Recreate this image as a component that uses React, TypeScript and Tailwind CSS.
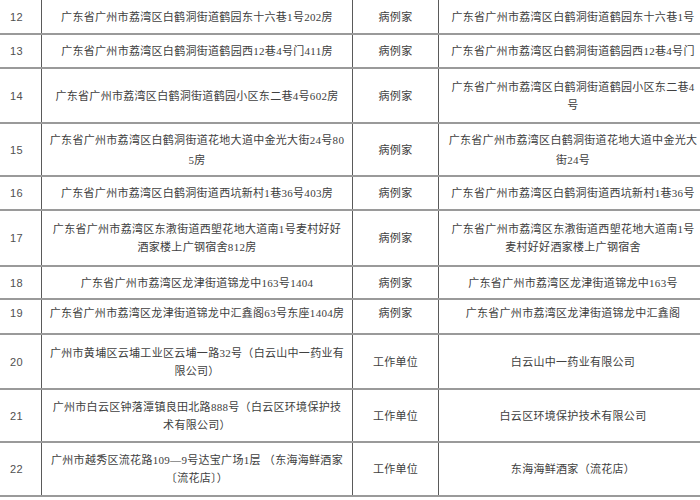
type Row = {
  no: string;
  h: string;
  addr: string[];
  kind: string;
  place: string[];
  pad?: string;
};

const rows: Row[] = [
  { no: "12", h: "h-[35px]", addr: ["广东省广州市荔湾区白鹤洞街道鹤园东十六巷1号202房"], kind: "病例家", place: ["广东省广州市荔湾区白鹤洞街道鹤园东十六巷1号"] },
  { no: "13", h: "h-[34px]", addr: ["广东省广州市荔湾区白鹤洞街道鹤园西12巷4号门411房"], kind: "病例家", place: ["广东省广州市荔湾区白鹤洞街道鹤园西12巷4号门"] },
  { no: "14", h: "h-[55px]", addr: ["广东省广州市荔湾区白鹤洞街道鹤园小区东二巷4号602房"], kind: "病例家", place: ["广东省广州市荔湾区白鹤洞街道鹤园小区东二巷4", "号"] },
  { no: "15", h: "h-[53px] leading-[20px]", addr: ["广东省广州市荔湾区白鹤洞街道花地大道中金光大街24号80", "5房"], kind: "病例家", place: ["广东省广州市荔湾区白鹤洞街道花地大道中金光大", "街24号"] },
  { no: "16", h: "h-[34px]", addr: ["广东省广州市荔湾区白鹤洞街道西坑新村1巷36号403房"], kind: "病例家", place: ["广东省广州市荔湾区白鹤洞街道西坑新村1巷36号"] },
  { no: "17", h: "h-[56px]", addr: ["广东省广州市荔湾区东漖街道西塱花地大道南1号麦村好好", "酒家楼上广钢宿舍812房"], kind: "病例家", place: ["广东省广州市荔湾区东漖街道西塱花地大道南1号", "麦村好好酒家楼上广钢宿舍"] },
  { no: "18", h: "h-[33px]", addr: ["广东省广州市荔湾区龙津街道锦龙中163号1404"], kind: "病例家", place: ["广东省广州市荔湾区龙津街道锦龙中163号"] },
  { no: "19", h: "h-[35px]", pad: "pb-[8px]", addr: ["广东省广州市荔湾区龙津街道锦龙中汇鑫阁63号东座1404房"], kind: "病例家", place: ["广东省广州市荔湾区龙津街道锦龙中汇鑫阁"] },
  { no: "20", h: "h-[55px]", addr: ["广州市黄埔区云埔工业区云埔一路32号（白云山中一药业有", "限公司）"], kind: "工作单位", place: ["白云山中一药业有限公司"] },
  { no: "21", h: "h-[53px]", addr: ["广州市白云区钟落潭镇良田北路888号（白云区环境保护技", "术有限公司）"], kind: "工作单位", place: ["白云区环境保护技术有限公司"] },
  { no: "22", h: "h-[54px]", addr: ["广州市越秀区流花路109—9号达宝广场1层 （东海海鲜酒家", "〔流花店〕）"], kind: "工作单位", place: ["东海海鲜酒家（流花店）"] },
];

function Lines({ lines }: { lines: string[] }) {
  return (
    <div className="flex flex-col items-center">
      {lines.map((l, i) => (
        <span key={i} className="whitespace-nowrap">{l}</span>
      ))}
    </div>
  );
}

export default function App() {
  return (
    <div className="w-[700px] h-[500px] overflow-hidden bg-white">
      <div
        className="ml-[-8px] w-[715px] text-[11px] leading-[18px] tracking-[0.3px] text-[#404040]"
        style={{ fontFamily: '"Liberation Serif", "Noto Sans CJK SC", serif' }}
      >
        {rows.map((r) => (
          <div
            key={r.no}
            className={`grid grid-cols-[50px_311px_86px_268px] border-b-2 border-[#9a9a9a] ${r.h}`}
          >
            <div className={`flex items-center justify-center border-r border-[#5a5a5a] font-['Liberation_Sans',sans-serif] text-[11px] text-[#505050] ${r.pad ?? ""}`}>
              {r.no}
            </div>
            <div className={`flex items-center justify-center border-r border-[#5a5a5a] ${r.pad ?? ""}`}>
              <Lines lines={r.addr} />
            </div>
            <div className={`flex items-center justify-center border-r border-[#5a5a5a] ${r.pad ?? ""}`}>
              {r.kind}
            </div>
            <div className={`flex items-center justify-center ${r.pad ?? ""}`}>
              <Lines lines={r.place} />
            </div>
          </div>
        ))}
      </div>
    </div>
  );
}
